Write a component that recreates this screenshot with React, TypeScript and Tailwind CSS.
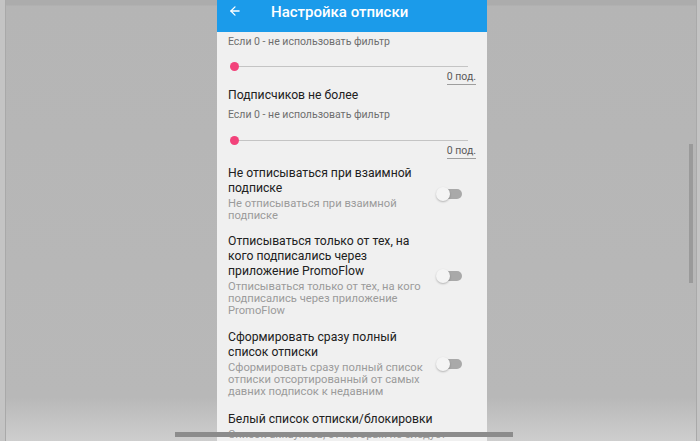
import { ArrowLeft } from 'lucide-react';

function Slider({ value }: { value: string }) {
  return (
    <div className="pl-[11px] pr-[11px]">
      <div className="relative h-[10px] mr-[8px]">
        <div className="absolute left-[6px] right-0 top-[5px] h-px bg-[#c4c4c4]" />
        <div className="absolute left-[2px] top-[1px] w-[9px] h-[9px] rounded-full bg-[#f2427a]" />
      </div>
      <div className="flex justify-end">
        <span className="text-[10.5px] leading-[12px] text-[#5a5a5a] border-b border-[#9e9e9e] pb-[1px]">{value}</span>
      </div>
    </div>
  );
}

function Toggle() {
  return (
    <div className="relative w-[26px] h-[14px] shrink-0">
      <div className="absolute left-[2px] right-0 top-[2px] h-[10px] rounded-full bg-[#a9a9a9]" />
      <div className="absolute left-0 top-0 w-[14px] h-[14px] rounded-full bg-[#f4f4f4] shadow-[0_1px_2px_rgba(0,0,0,0.25)]" />
    </div>
  );
}

function Lines({ items, className }: { items: string[]; className: string }) {
  return (
    <div className={className}>
      {items.map((t) => (
        <div key={t} className="whitespace-nowrap">
          {t}
        </div>
      ))}
    </div>
  );
}

function SwitchRow({ title, sub, pt }: { title: string[]; sub: string[]; pt: string }) {
  return (
    <div className={`flex items-center pl-[11px] pr-[25px] ${pt}`}>
      <div className="w-[190px]">
        <Lines items={title} className="text-[12.2px] leading-[15px] text-[#212121]" />
        <Lines items={sub} className="mt-[2px] text-[11.2px] leading-[12px] text-[#9b9b9b]" />
      </div>
      <div className="ml-auto">
        <Toggle />
      </div>
    </div>
  );
}

export default function App() {
  return (
    <div className="relative w-[700px] h-[441px] overflow-hidden bg-[#c4c4c4] font-['Roboto',sans-serif]">
      <div className="h-full ml-[5px] mr-[3px] border-l border-r border-[#a9a9a9] bg-[linear-gradient(to_bottom,#acacac_0px,#acacac_5px,#b5b5b5_6px,#b8b8b8_90%,#cecece_100%)]">
        <div className="ml-[211px] w-[270px] h-full bg-[#f0f0f0] flex flex-col overflow-hidden">
          {/* App bar */}
          <div className="h-[32px] shrink-0 bg-[#1b9bea] flex items-start pt-[3px] pl-[11px]">
            <ArrowLeft className="w-[14px] h-[14px] text-white mt-[1px]" strokeWidth={2.2} />
            <span className="ml-[29px] text-[15px] leading-[18px] font-medium text-white">Настройка отписки</span>
          </div>

          {/* Content */}
          <div className="pt-[4px]">
            <div className="pl-[11px] text-[10.5px] leading-[12px] text-[#6e6e6e]">Если 0 - не использовать фильтр</div>
            <div className="mt-[13px]">
              <Slider value="0 под." />
            </div>

            <div className="pl-[11px] mt-[3px] text-[12.2px] leading-[15px] text-[#212121]">Подписчиков не более</div>
            <div className="pl-[11px] mt-[6px] text-[10.5px] leading-[12px] text-[#6e6e6e]">Если 0 - не использовать фильтр</div>
            <div className="mt-[14px]">
              <Slider value="0 под." />
            </div>

            <SwitchRow
              pt="pt-[7px]"
              title={['Не отписываться при взаимной', 'подписке']}
              sub={['Не отписываться при взаимной', 'подписке']}
            />
            <SwitchRow
              pt="pt-[12px]"
              title={['Отписываться только от тех, на', 'кого подписались через', 'приложение PromoFlow']}
              sub={['Отписываться только от тех, на кого', 'подписались через приложение', 'PromoFlow']}
            />
            <SwitchRow
              pt="pt-[13px]"
              title={['Сформировать сразу полный', 'список отписки']}
              sub={['Сформировать сразу полный список', 'отписки отсортированный от самых', 'давних подписок к недавним']}
            />

            <div className="pl-[11px] pt-[14px]">
              <div className="whitespace-nowrap text-[12.2px] leading-[15px] text-[#212121]">Белый список отписки/блокировки</div>
              <div className="whitespace-nowrap mt-[2px] text-[11.2px] leading-[12px] text-[#9b9b9b]">Список аккаунтов, от которых не следует</div>
            </div>
          </div>
        </div>
      </div>

      {/* overlay scrollbars */}
      <div className="absolute left-[689px] top-[144px] w-[4px] h-[139px] bg-[#9a9a9a]" />
      <div className="absolute left-[175px] top-[432px] w-[338px] h-[5px] bg-[#8c8c8c]" />
    </div>
  );
}
